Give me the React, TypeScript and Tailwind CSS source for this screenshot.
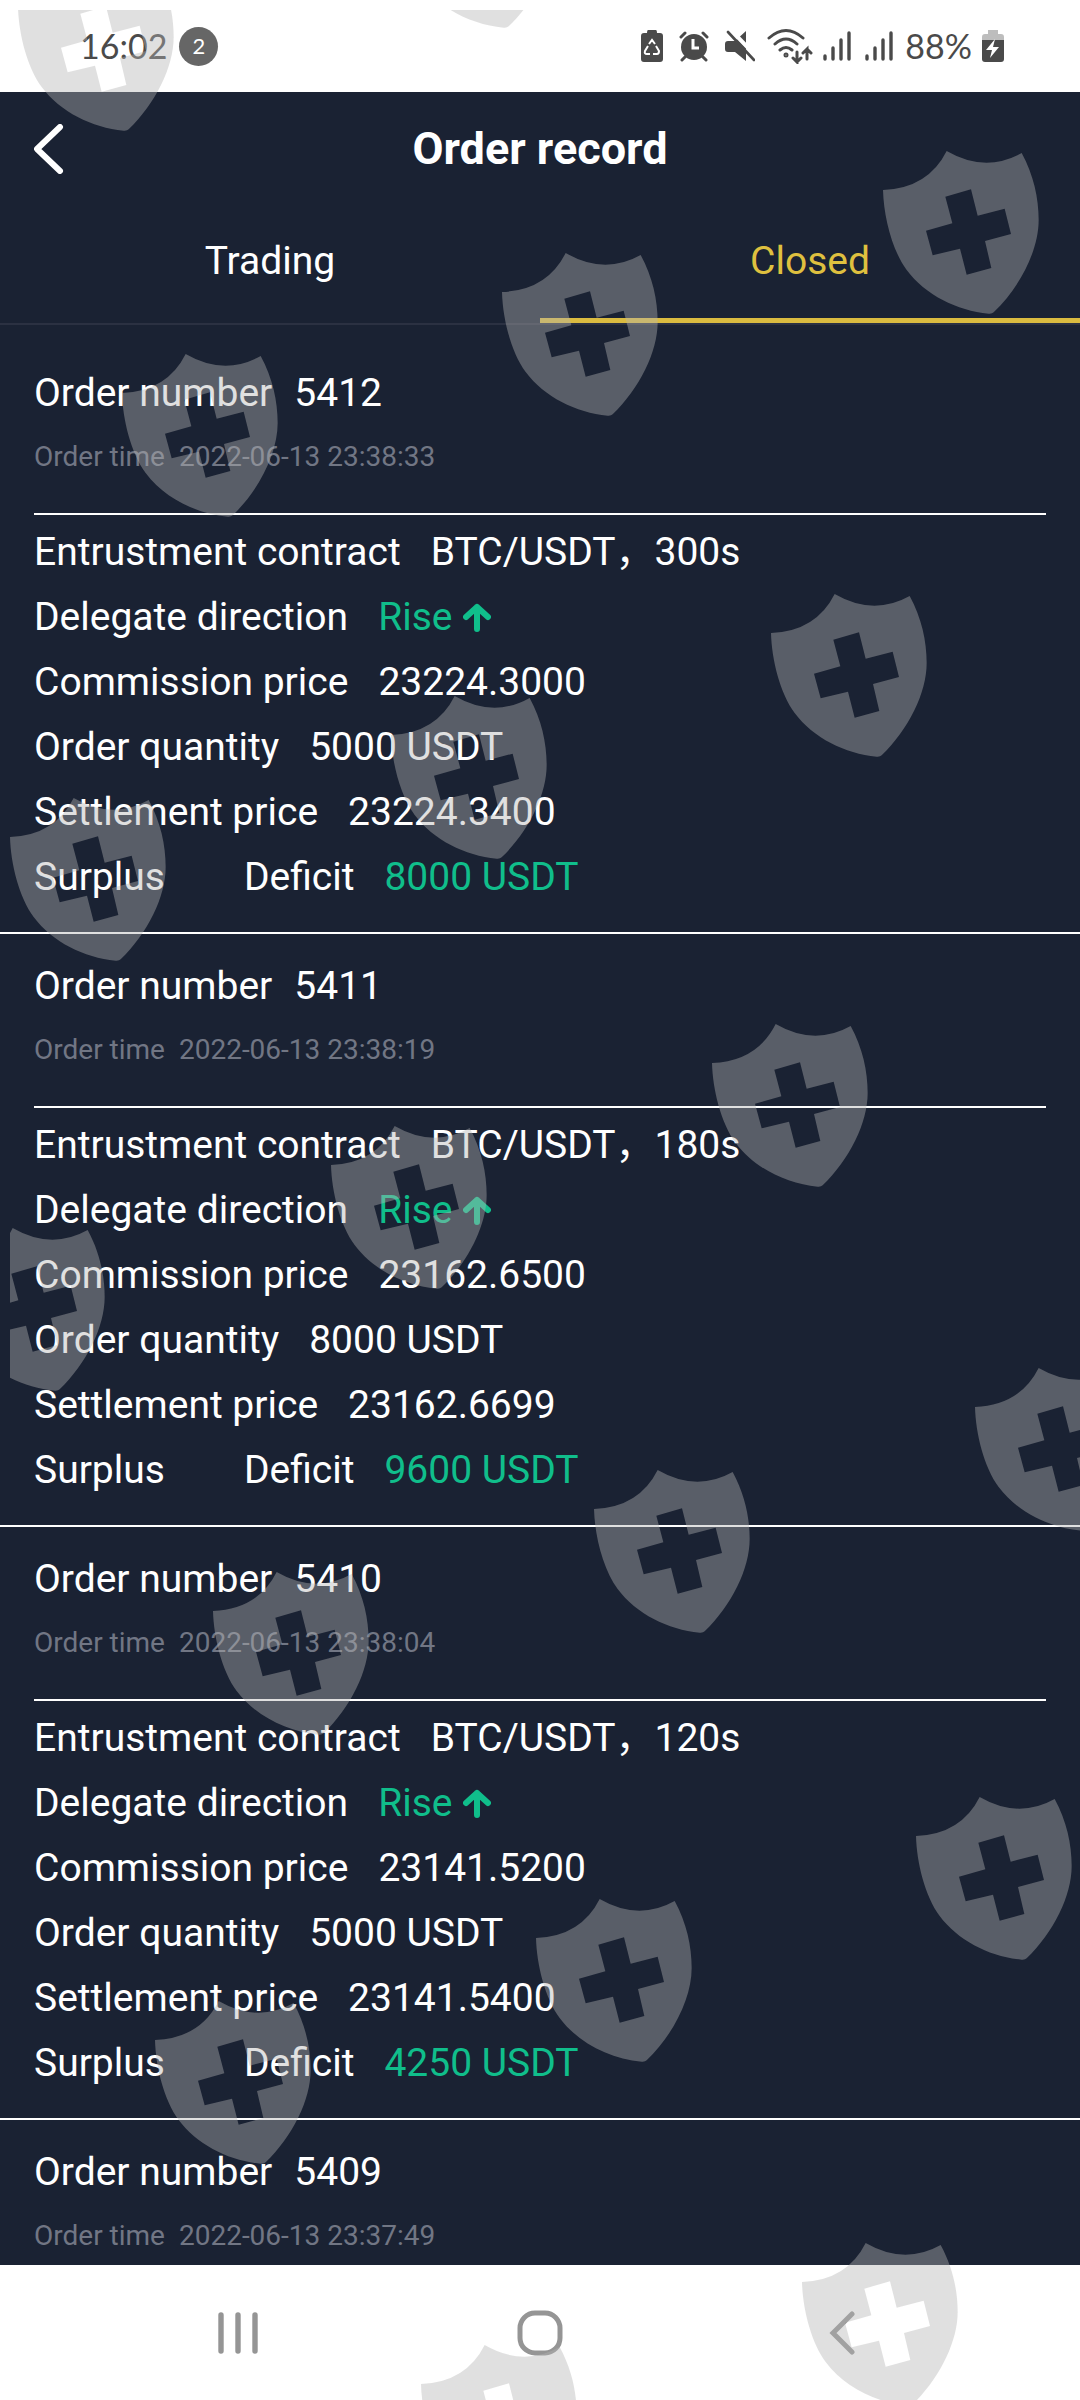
import type { ReactNode } from "react"

type Order = {
  number: string
  time: string
  details?: {
    contract: string
    commission: string
    quantity: string
    settlement: string
    profit: string
  }
}

const orders: Order[] = [
  {
    number: "5412",
    time: "2022-06-13 23:38:33",
    details: { contract: "BTC/USDT，300s", commission: "23224.3000", quantity: "5000 USDT", settlement: "23224.3400", profit: "8000 USDT" },
  },
  {
    number: "5411",
    time: "2022-06-13 23:38:19",
    details: { contract: "BTC/USDT，180s", commission: "23162.6500", quantity: "8000 USDT", settlement: "23162.6699", profit: "9600 USDT" },
  },
  {
    number: "5410",
    time: "2022-06-13 23:38:04",
    details: { contract: "BTC/USDT，120s", commission: "23141.5200", quantity: "5000 USDT", settlement: "23141.5400", profit: "4250 USDT" },
  },
  { number: "5409", time: "2022-06-13 23:37:49" },
]

// top left corner of every shield on the watermark layer
const shields = [
  [398, -135], [18, -32],
  [883, 151], [502, 253], [122, 354],
  [771, 594], [391, 696], [10, 798],
  [712, 1024], [331, 1126], [-51, 1228],
  [975, 1368], [594, 1470], [213, 1572],
  [916, 1797], [536, 1899], [155, 2001],
  [802, 2243], [421, 2345],
]

function Watermark() {
  return (
    <div className="pointer-events-none absolute top-[10px] right-0 bottom-0 left-[10px] overflow-hidden">
      {shields.map(([x, y]) => (
        <svg
          key={`${x}-${y}`}
          viewBox="33 43 468 489"
          className="absolute h-[163px] w-[156px] fill-[#b4b4b4]/41"
          style={{ left: x - 10, top: y - 10 }}
          aria-hidden="true"
        >
          <path
            fillRule="evenodd"
            d="M224 43Q340 110 449 49C485 115 500 185 500 250C500 340 445 450 365 527Q360 532 350 531C255 522 160 475 104 400C60 340 35 240 33 160Q168 155 224 43ZM220 180L241 260L162 282L182 356L264 336L284 414L358 394L339 313L417 292L398 216L317 237L297 158Z"
          />
        </svg>
      ))}
    </div>
  )
}

function Signal() {
  return (
    <svg viewBox="0 0 28 32" className="h-8 w-7" stroke="#4a4a4a" strokeWidth="3.4" strokeLinecap="round" aria-hidden="true">
      <path d="M2 26v3M10 18v11M18 10v19M26 3v26" />
    </svg>
  )
}

function StatusBar() {
  return (
    <div className="flex h-[92px] shrink-0 items-center justify-between bg-white pr-[76px] pl-20 font-['Lato',sans-serif] text-[34px] leading-none text-[#4a4a4a]">
      <div className="flex items-center gap-3">
        <span>16:02</span>
        <span className="flex size-[39px] items-center justify-center rounded-full bg-[#666] text-[22px] text-white">2</span>
      </div>
      <div className="flex items-center gap-3">
        <div className="flex items-center gap-4">
          <svg viewBox="0 0 22 32" className="h-8 w-[22px]" aria-hidden="true">
            <path fill="#4a4a4a" d="M7 0h8q1 0 1 3h3q3 0 3 3v23q0 3-3 3H3q-3 0-3-3V6q0-3 3-3h3q0-3 1-3z" />
            <path fill="none" stroke="#fff" strokeWidth="2" d="M8 14l3-4 3 4M15 16l3 5q0 3-2 3h-4M9 24H6q-3 0-2-3l3-5" />
          </svg>
          <svg viewBox="0 0 30 32" className="h-8 w-[30px]" aria-hidden="true">
            <circle cx="15" cy="17" r="13" fill="#4a4a4a" />
            <path fill="none" stroke="#4a4a4a" strokeWidth="3" strokeLinecap="round" d="M2 7l4-4M28 7l-4-4M6 27l-3 3M24 27l3 3" />
            <path fill="none" stroke="#fff" strokeWidth="3" d="M14 9v9h6" />
          </svg>
          <svg viewBox="0 0 30 32" className="h-8 w-[30px]" aria-hidden="true">
            <path fill="#4a4a4a" d="M21 1v30L10 22H3q-3 0-3-3v-5q0-3 3-3h7z" />
            <path stroke="#fff" strokeWidth="4" d="M5 -1l26 27" />
            <path stroke="#4a4a4a" strokeWidth="2.6" strokeLinecap="round" d="M3 2l26 28" />
          </svg>
        </div>
        <div className="flex items-center gap-[10px]">
          <svg viewBox="0 0 46 36" className="h-9 w-[46px]" fill="none" stroke="#4a4a4a" strokeWidth="3" strokeLinecap="round" aria-hidden="true">
            <path d="M2 10q17-15 34 0M8 16q11-10 22 0M13 22q6-5 12 0M30 24v10l-4-4M30 34l4-4M40 31V21l-4 4M40 21l4 4" />
            <circle cx="19" cy="27" r="1" />
          </svg>
          <div className="flex gap-[14px]">
            <Signal />
            <Signal />
          </div>
        </div>
        <div className="flex items-center gap-[10px]">
          <span>88%</span>
          <svg viewBox="0 0 22 32" className="h-8 w-[22px]" aria-hidden="true">
            <path fill="#bdbdbd" d="M6 0h10v4h3q3 0 3 3v4H0V7q0-3 3-3h3z" />
            <path fill="#4a4a4a" d="M0 10h22v19q0 3-3 3H3q-3 0-3-3z" />
            <path fill="#fff" d="M13 9L4 20h6l-2 8 9-11h-6z" />
          </svg>
        </div>
      </div>
    </div>
  )
}

function Row({ label, children }: { label: ReactNode; children: ReactNode }) {
  return (
    <div className="flex h-[65px] items-center gap-[30px]">
      <dt>{label}</dt>
      <dd className="flex items-center">{children}</dd>
    </div>
  )
}

function OrderCard({ number, time, details }: Order) {
  return (
    <li className="border-b-2 border-white px-[34px] pb-[22px] last:border-b-0 last:pb-0">
      <div className={details ? "border-b-2 border-white pt-5 pb-7" : "pt-5"}>
        <h2 className="flex h-16 items-center gap-[22px]">
          <span>Order number</span>
          <span>{number}</span>
        </h2>
        <p className="flex h-[60px] items-center gap-[14px] pt-1 text-[28px] text-[#717684]">
          <span>Order time</span>
          <time>{time}</time>
        </p>
      </div>
      {details && (
        <dl className="pt-[5px]">
          <Row label="Entrustment contract">{details.contract}</Row>
          <Row label="Delegate direction">
            <span className="text-[#10be8b]">Rise</span>
            <svg viewBox="0 0 28 30" className="ml-[11px] h-[30px] w-7" fill="none" stroke="#10be8b" strokeWidth="6" strokeLinecap="round" strokeLinejoin="round" aria-hidden="true">
              <path d="M14 26V4M3 14L14 4l11 10" />
            </svg>
          </Row>
          <Row label="Commission price">{details.commission}</Row>
          <Row label="Order quantity">{details.quantity}</Row>
          <Row label="Settlement price">{details.settlement}</Row>
          <Row
            label={
              <span className="flex gap-[79px]">
                <span>Surplus</span>
                <span>Deficit</span>
              </span>
            }
          >
            <span className="text-[#10be8b]">{details.profit}</span>
          </Row>
        </dl>
      )}
    </li>
  )
}

export default function App() {
  return (
    <div className="relative flex min-h-screen flex-col overflow-hidden bg-[#1a2233] font-['Roboto','Noto_Sans_CJK_SC',sans-serif] text-[39px] leading-none text-white">
      <StatusBar />
      <header className="grid h-[113px] shrink-0 grid-cols-3 items-center px-[34px]">
        <button type="button" aria-label="Back" className="w-8">
          <svg viewBox="0 0 30 50" className="h-[50px] w-[30px]" fill="none" stroke="#fff" strokeWidth="6" strokeLinecap="round" strokeLinejoin="round" aria-hidden="true">
            <path d="M26 3L3 25l23 22" />
          </svg>
        </button>
        <h1 className="text-center text-[45px] font-bold whitespace-nowrap">Order record</h1>
      </header>
      <div role="tablist" className="grid h-[120px] shrink-0 grid-cols-2 border-b-2 border-[#2b3142]">
        <button type="button" role="tab" aria-selected="false" className="border-b-5 border-transparent">Trading</button>
        <button type="button" role="tab" aria-selected="true" className="border-b-5 border-[#dabb40] text-[#dfc03f]">Closed</button>
      </div>
      <ul className="flex-1 pt-4">
        {orders.map((order) => (
          <OrderCard key={order.number} {...order} />
        ))}
      </ul>
      <nav className="grid h-[135px] shrink-0 grid-cols-3 items-center justify-items-center bg-white px-[87px]">
        <button type="button" aria-label="Recent apps">
          <svg viewBox="0 0 42 44" className="h-11 w-[42px]" stroke="#959595" strokeWidth="5.4" strokeLinecap="round" aria-hidden="true">
            <path d="M4 4v36M21 4v36M38 4v36" />
          </svg>
        </button>
        <button type="button" aria-label="Home">
          <svg viewBox="0 0 46 46" className="size-[46px]" fill="none" stroke="#959595" strokeWidth="5" aria-hidden="true">
            <rect x="3" y="3" width="40" height="40" rx="15" />
          </svg>
        </button>
        <button type="button" aria-label="Back">
          <svg viewBox="0 0 26 44" className="h-11 w-[26px]" fill="none" stroke="#959595" strokeWidth="5" strokeLinecap="round" strokeLinejoin="miter" aria-hidden="true">
            <path d="M23 3L4 22l19 19" />
          </svg>
        </button>
      </nav>
      <Watermark />
    </div>
  )
}
